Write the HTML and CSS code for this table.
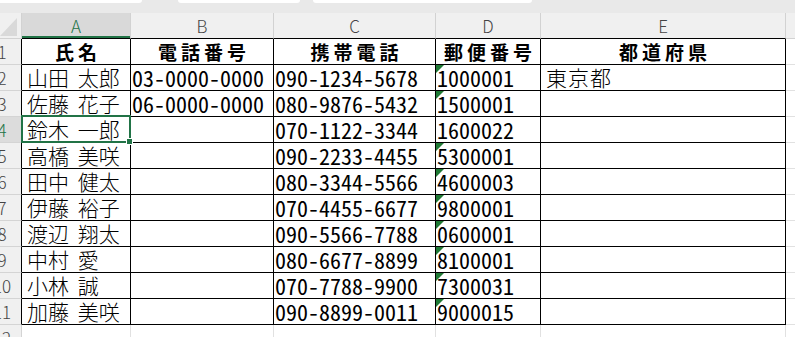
FILE: index.html
```html
<!DOCTYPE html>
<html lang="ja">
<head>
<meta charset="utf-8">
<title>Sheet</title>
<link rel="stylesheet" href="styles.css">
</head>
<body>
<div class="sheet">
  <div class="topband">
    <span class="tab t1"></span><span class="tab t2"></span><span class="tab t3"></span>
  </div>
  <div class="row colheads">
    <div class="corner"><svg width="21" height="25" viewBox="0 0 21 25"><polygon points="17,5 17,23 0,23" fill="#d9d9d9"/></svg></div>
    <div class="ch sel">A</div>
    <div class="ch">B</div>
    <div class="ch">C</div>
    <div class="ch">D</div>
    <div class="ch">E</div>
    <div class="ch fcol"></div>
  </div>

  <div class="row">
    <div class="rh"><span>1</span></div>
    <div class="c hdr">氏名</div>
    <div class="c hdr">電話番号</div>
    <div class="c hdr">携帯電話</div>
    <div class="c hdr">郵便番号</div>
    <div class="c hdr">都道府県</div>
    <div class="c f"></div>
  </div>
  <div class="row">
    <div class="rh"><span>2</span></div>
    <div class="c nm">山田 太郎</div>
    <div class="c n">03-0000-0000</div>
    <div class="c n">090-1234-5678</div>
    <div class="c n tri">1000001</div>
    <div class="c pref">東京都</div>
    <div class="c f"></div>
  </div>
  <div class="row">
    <div class="rh"><span>3</span></div>
    <div class="c nm">佐藤 花子</div>
    <div class="c n">06-0000-0000</div>
    <div class="c n">080-9876-5432</div>
    <div class="c n tri">1500001</div>
    <div class="c"></div>
    <div class="c f"></div>
  </div>
  <div class="row">
    <div class="rh selrow"><span>4</span></div>
    <div class="c nm active">鈴木 一郎<span class="selbox"></span><span class="handle"></span></div>
    <div class="c"></div>
    <div class="c n">070-1122-3344</div>
    <div class="c n">1600022</div>
    <div class="c"></div>
    <div class="c f"></div>
  </div>
  <div class="row">
    <div class="rh"><span>5</span></div>
    <div class="c nm">高橋 美咲</div>
    <div class="c"></div>
    <div class="c n">090-2233-4455</div>
    <div class="c n tri">5300001</div>
    <div class="c"></div>
    <div class="c f"></div>
  </div>
  <div class="row">
    <div class="rh"><span>6</span></div>
    <div class="c nm">田中 健太</div>
    <div class="c"></div>
    <div class="c n">080-3344-5566</div>
    <div class="c n tri">4600003</div>
    <div class="c"></div>
    <div class="c f"></div>
  </div>
  <div class="row">
    <div class="rh"><span>7</span></div>
    <div class="c nm">伊藤 裕子</div>
    <div class="c"></div>
    <div class="c n">070-4455-6677</div>
    <div class="c n tri">9800001</div>
    <div class="c"></div>
    <div class="c f"></div>
  </div>
  <div class="row">
    <div class="rh"><span>8</span></div>
    <div class="c nm">渡辺 翔太</div>
    <div class="c"></div>
    <div class="c n">090-5566-7788</div>
    <div class="c n tri">0600001</div>
    <div class="c"></div>
    <div class="c f"></div>
  </div>
  <div class="row">
    <div class="rh"><span>9</span></div>
    <div class="c nm">中村 愛</div>
    <div class="c"></div>
    <div class="c n">080-6677-8899</div>
    <div class="c n tri">8100001</div>
    <div class="c"></div>
    <div class="c f"></div>
  </div>
  <div class="row">
    <div class="rh"><span>10</span></div>
    <div class="c nm">小林 誠</div>
    <div class="c"></div>
    <div class="c n">070-7788-9900</div>
    <div class="c n tri">7300031</div>
    <div class="c"></div>
    <div class="c f"></div>
  </div>
  <div class="row">
    <div class="rh"><span>11</span></div>
    <div class="c nm">加藤 美咲</div>
    <div class="c"></div>
    <div class="c n">090-8899-0011</div>
    <div class="c n tri">9000015</div>
    <div class="c"></div>
    <div class="c f"></div>
  </div>
  <div class="row empty">
    <div class="rh"><span>12</span></div>
    <div class="c"></div>
    <div class="c"></div>
    <div class="c"></div>
    <div class="c"></div>
    <div class="c"></div>
    <div class="c f"></div>
  </div>
</div>
</body>
</html>
```
FILE: styles.css
```css
* { box-sizing: border-box; }
html, body { margin: 0; padding: 0; background: #fff; }
body {
  width: 795px;
  height: 337px;
  overflow: hidden;
  font-family: "Noto Sans CJK JP", "Noto Sans", sans-serif;
}
.sheet { width: 795px; }

.topband {
  height: 13px;
  background: #e9e9e9;
  display: flex;
  align-items: flex-start;
}
.tab {
  height: 3px;
  background: #fff;
  border-radius: 0 0 5px 5px;
}
.t1 { width: 142px; border-radius: 0 0 6px 0; }
.t2 { width: 122px; margin-left: 36px; }
.t3 { width: 219px; margin-left: 13px; }

.row {
  display: grid;
  grid-template-columns: 22px 109px 143px 162px 105px 245px 1fr;
  height: 26px;
}

.corner {
  background: #f0f0f0;
  border-right: 1px solid #d2d2d2;
  border-bottom: 1px solid #d2d2d2;
  height: 26px;
}
.corner svg { display: block; }

.ch {
  background: #f0f0f0;
  border-right: 1px solid #d2d2d2;
  border-bottom: 1px solid #000;
  font-weight: 300;
  font-size: 17px;
  line-height: 25px;
  color: #444;
  text-align: center;
}
.ch.sel {
  background: #d9d9d9;
  color: #217346;
  box-shadow: inset 0 -2px 0 #217346;
}
.ch.fcol { border-bottom-color: #d2d2d2; border-right: 0; }

.rh {
  background: #f0f0f0;
  border-right: 1px solid #000;
  border-bottom: 1px solid #d4d4d4;
  overflow: hidden;
  font-weight: 300;
  font-size: 17px;
  line-height: 25px;
  color: #444;
}
.rh span {
  display: block;
  width: 30px;
  margin-left: -13px;
  text-align: center;
}
.rh.selrow { background: #dcdcdc; color: #217346; }

.c {
  border-right: 1px solid #000;
  border-bottom: 1px solid #000;
  font-size: 21px;
  font-weight: 300;
  line-height: 25px;
  color: #000;
  padding-left: 3px;
  white-space: nowrap;
  overflow: hidden;
}
.c.nm { padding-left: 5px; word-spacing: 4px; }
.c.pref { padding-left: 5px; letter-spacing: 1px; }
.c.n {
  font-family: "Noto Sans Mono CJK JP", "Noto Sans CJK JP", monospace;
  font-size: 22px;
  padding-left: 1px;
}
.c.f {
  border-right: 0;
  border-bottom: 1px solid #e1e1e1;
}
.c.hdr {
  font-weight: 700;
  font-size: 19px;
  letter-spacing: 4px;
  text-align: center;
  padding-left: 4px;
}
.c.tri { position: relative; }
.c.tri::before {
  content: "";
  position: absolute;
  left: 0;
  top: 0;
  border-top: 8px solid #1f7a35;
  border-right: 8px solid transparent;
}

.c.active { position: relative; overflow: visible; }
.selbox {
  position: absolute;
  left: -1px;
  top: -2px;
  right: -1px;
  bottom: -1px;
  border: 2px solid #217346;
}
.handle {
  position: absolute;
  right: -3px;
  bottom: -3px;
  width: 7px;
  height: 7px;
  background: #217346;
  border: 1px solid #fff;
  z-index: 2;
}

.row.empty .rh { border-right-color: #d4d4d4; border-bottom: 0; }
.row.empty .c { border-right-color: #e1e1e1; border-bottom: 0; }
.row.empty .c.f { border-right: 0; }
```
